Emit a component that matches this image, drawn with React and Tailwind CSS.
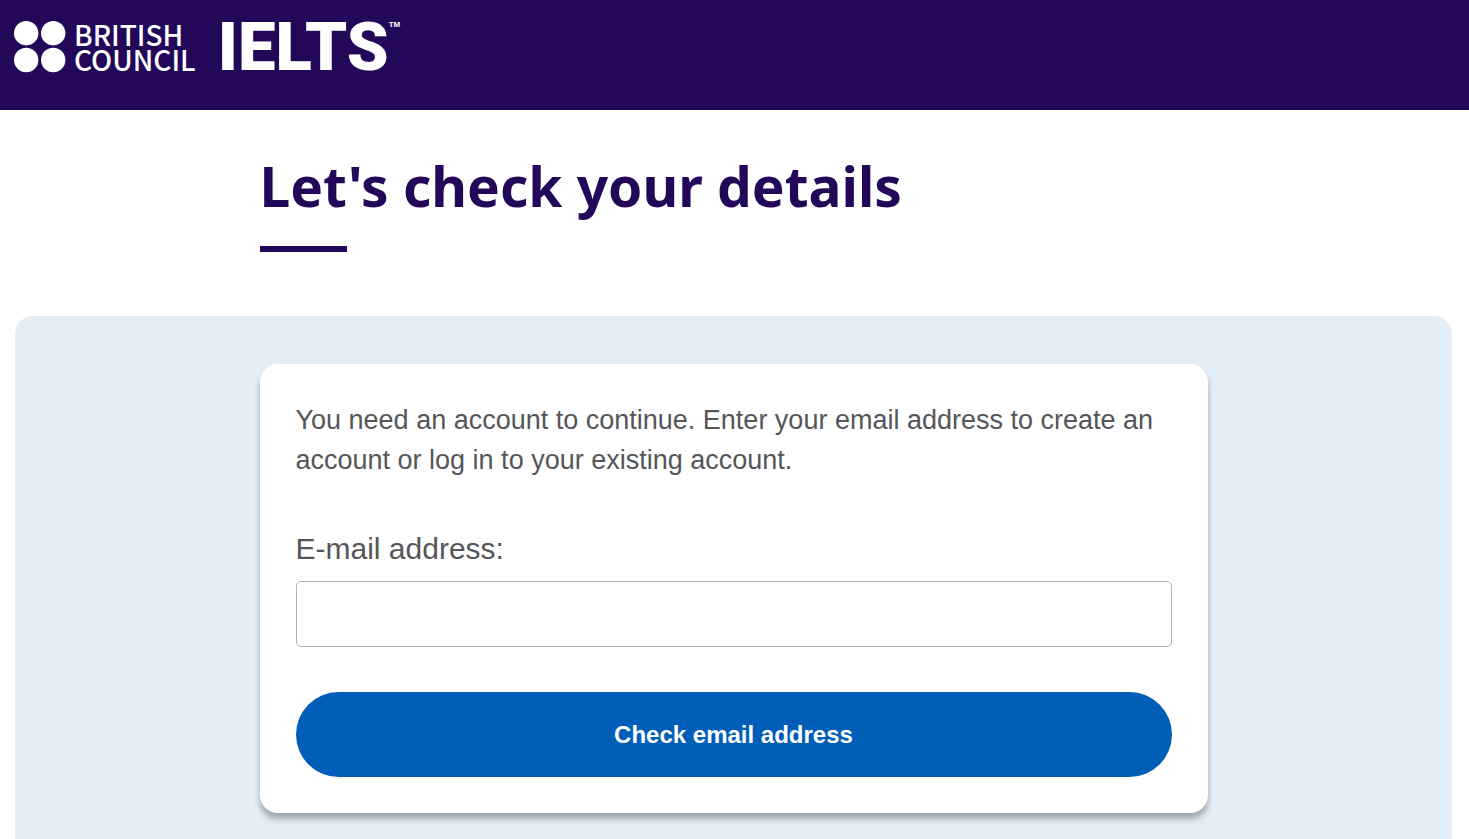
import React, { useState } from 'react';

function BritishCouncilLogo() {
  return (
    <div className="flex items-center gap-2">
      <svg className="w-[52px] h-[52px] shrink-0" viewBox="0 0 52 52" fill="currentColor" aria-hidden="true">
        <circle cx="12.2" cy="12.2" r="12.2" />
        <circle cx="39.2" cy="12.2" r="12.2" />
        <circle cx="12.2" cy="39" r="12.2" />
        <circle cx="39.2" cy="39" r="12.2" />
      </svg>
      <div className="font-['Noto_Sans_CJK_SC',sans-serif] font-medium text-[28px] leading-[25px]">
        <div>BRITISH</div>
        <div>COUNCIL</div>
      </div>
    </div>
  );
}

function IeltsLogo() {
  return (
    <div className="flex items-start">
      <span className="font-['Roboto',sans-serif] font-black text-[67px] leading-[54px]">IELTS</span>
      <span className="font-['Liberation_Sans',sans-serif] font-bold text-[8px] leading-[10px]">TM</span>
    </div>
  );
}

export default function App() {
  const [email, setEmail] = useState("");

  const handleSubmit = (e) => {
    e.preventDefault();
  };

  return (
    <div className="bg-white min-h-screen font-['Liberation_Sans',Arial,sans-serif]">
      <header className="bg-[#23085a] text-white px-[14px] pt-5 pb-9">
        <a href="#" className="inline-flex items-center gap-[22px] align-top" aria-label="British Council IELTS">
          <BritishCouncilLogo />
          <IeltsLogo />
        </a>
      </header>

      <main className="pl-[15px] pr-[17px]">
        <div className="max-w-[948px] mx-auto pt-10 pb-16">
          <h1 className="font-['Noto_Sans',sans-serif] font-bold text-[55px] leading-[72px] text-[#23085a]">Let's check your details</h1>
          <div className="w-[87px] h-[6px] mt-6 bg-[#23085a]" />
        </div>

        {/* Sign in panel */}
        <section className="bg-[#e4eef7] rounded-t-[18px] pt-12 pb-12">
          <form onSubmit={handleSubmit} className="max-w-[948px] mx-auto bg-white rounded-[18px] p-9 shadow-[0_6px_6px_rgba(0,0,0,0.3)]">
            <p className="text-[27px] leading-10 text-[#54565a]">
              You need an account to continue. Enter your email address to create an account or log in to your existing account.
            </p>
            <label htmlFor="email" className="block mt-12 text-[30px] leading-[42px] text-[#54565a]">E-mail address:</label>
            <input
              id="email"
              type="email"
              className="block w-full h-[66px] mt-[11px] px-4 text-[27px] text-[#54565a] bg-white border border-[#b2b2b2] rounded-[5px]"
              value={email}
              onChange={e => setEmail(e.target.value)}
            />
            <button type="submit" className="block w-full h-[85px] mt-[45px] rounded-full bg-[#005eb8] text-white text-2xl font-bold">
              Check email address
            </button>
          </form>
        </section>
      </main>
    </div>
  );
}
